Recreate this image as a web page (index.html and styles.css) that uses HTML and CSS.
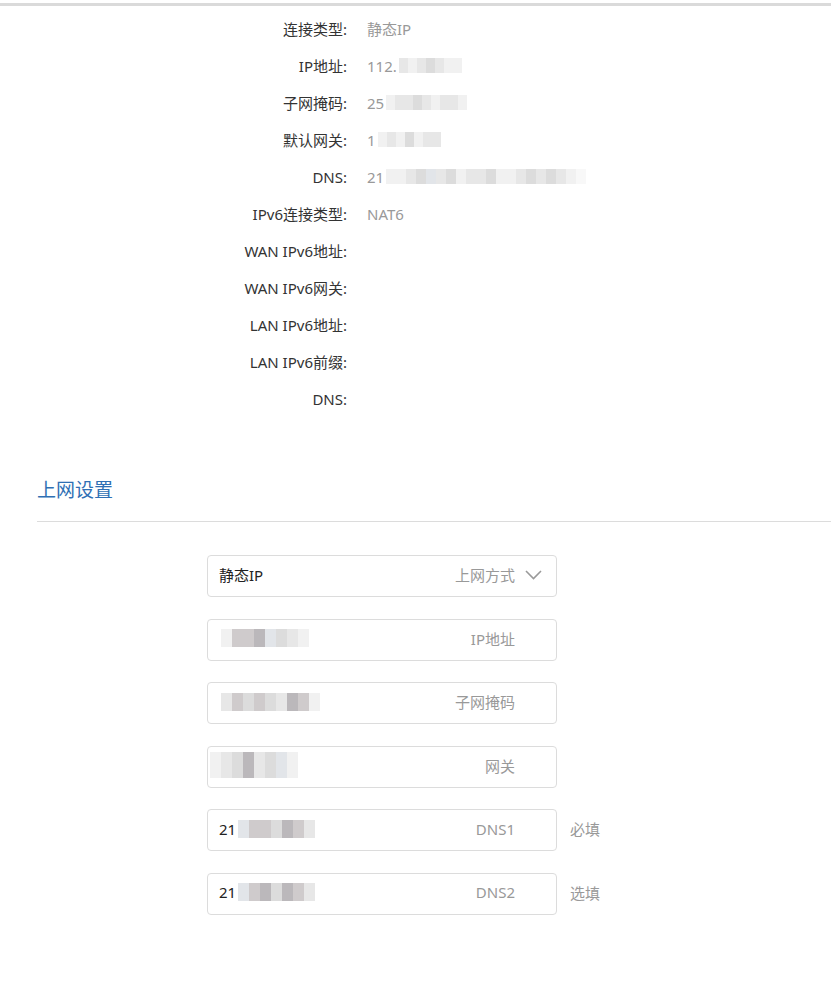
FILE: index.html
```html
<!DOCTYPE html>
<html lang="zh-CN">
<head>
    <meta charset="UTF-8">
    <title>网络设置</title>
    <link rel="stylesheet" href="styles.css">
</head>
<body>
<div class="page">

    <!-- 当前连接状态 -->
    <ul class="info">
        <li class="info-row"><span class="info-label">连接类型:</span><span class="info-value">静态IP</span></li>
        <li class="info-row"><span class="info-label">IP地址:</span><span class="info-value">112.<span class="mosaic"><i class="m2"></i><i class="m1"></i><i class="m2"></i><i class="m3"></i><i class="m2"></i><i class="m1"></i><i class="m1"></i></span></span></li>
        <li class="info-row"><span class="info-label">子网掩码:</span><span class="info-value">25<span class="mosaic"><i class="m1"></i><i class="m2"></i><i class="m2"></i><i class="m3"></i><i class="m2"></i><i class="m1"></i><i class="m2"></i><i class="m2"></i><i class="m1"></i></span></span></li>
        <li class="info-row"><span class="info-label">默认网关:</span><span class="info-value">1<span class="mosaic"><i class="m1"></i><i class="m2"></i><i class="m1"></i><i class="m3"></i><i class="m1"></i><i class="m2"></i><i class="m2"></i></span></span></li>
        <li class="info-row"><span class="info-label">DNS:</span><span class="info-value">21<span class="mosaic mosaic-long"><i class="m1"></i><i class="m1"></i><i class="m2"></i><i class="m3"></i><i class="m6"></i><i class="m2"></i><i class="m3"></i><i class="m1"></i><i class="m2"></i><i class="m2"></i><i class="m3"></i><i class="m1"></i><i class="m1"></i><i class="m2"></i><i class="m3"></i><i class="m2"></i><i class="m3"></i><i class="m2"></i><i class="m1"></i><i class="m0"></i></span></span></li>
        <li class="info-row"><span class="info-label">IPv6连接类型:</span><span class="info-value">NAT6</span></li>
        <li class="info-row"><span class="info-label">WAN IPv6地址:</span><span class="info-value"></span></li>
        <li class="info-row"><span class="info-label">WAN IPv6网关:</span><span class="info-value"></span></li>
        <li class="info-row"><span class="info-label">LAN IPv6地址:</span><span class="info-value"></span></li>
        <li class="info-row"><span class="info-label">LAN IPv6前缀:</span><span class="info-value"></span></li>
        <li class="info-row"><span class="info-label">DNS:</span><span class="info-value"></span></li>
    </ul>

    <!-- 上网设置 -->
    <div class="section">
        <h2 class="section-title">上网设置</h2>

        <form class="net-form">
            <div class="form-row">
                <div class="field field-select">
                    <span class="field-value field-text">静态IP</span>
                    <span class="field-name">上网方式</span>
                    <svg class="chevron" width="17" height="10" viewBox="0 0 17 10"><polyline points="1,1 8.5,8.5 16,1" fill="none" stroke="#9a9a9a" stroke-width="1.6"/></svg>
                </div>
            </div>

            <div class="form-row">
                <div class="field">
                    <span class="field-value"><span class="mosaic mosaic-input"><i class="m1"></i><i class="m4"></i><i class="m4"></i><i class="m5"></i><i class="m6"></i><i class="m3"></i><i class="m2"></i><i class="m1"></i></span></span>
                    <span class="field-name">IP地址</span>
                </div>
            </div>

            <div class="form-row">
                <div class="field">
                    <span class="field-value"><span class="mosaic mosaic-input"><i class="m2"></i><i class="m4"></i><i class="m3"></i><i class="m4"></i><i class="m3"></i><i class="m2"></i><i class="m5"></i><i class="m4"></i><i class="m1"></i></span></span>
                    <span class="field-name">子网掩码</span>
                </div>
            </div>

            <div class="form-row">
                <div class="field field-gw">
                    <span class="field-value"><span class="mosaic mosaic-input mosaic-tall"><i class="m1"></i><i class="m2"></i><i class="m3"></i><i class="m5"></i><i class="m2"></i><i class="m3"></i><i class="m6"></i><i class="m1"></i></span></span>
                    <span class="field-name">网关</span>
                </div>
            </div>

            <div class="form-row">
                <div class="field">
                    <span class="field-value field-text">21<span class="mosaic mosaic-input"><i class="m6"></i><i class="m4"></i><i class="m4"></i><i class="m3"></i><i class="m5"></i><i class="m4"></i><i class="m2"></i></span></span>
                    <span class="field-name">DNS1</span>
                </div>
                <span class="field-note">必填</span>
            </div>

            <div class="form-row">
                <div class="field">
                    <span class="field-value field-text">21<span class="mosaic mosaic-input"><i class="m6"></i><i class="m4"></i><i class="m5"></i><i class="m3"></i><i class="m5"></i><i class="m4"></i><i class="m2"></i></span></span>
                    <span class="field-name">DNS2</span>
                </div>
                <span class="field-note">选填</span>
            </div>
        </form>
    </div>

</div>
</body>
</html>
```

FILE: styles.css
```css
/* 基础 */
body {
    margin: 0;
    background: #fff;
    color: #333;
    font-family: "Microsoft YaHei", "Noto Sans", "Noto Sans CJK SC", sans-serif;
    font-size: 15px;
}

.page {
    margin-top: 3px;
    border-top: 3px solid #dadada;
    padding-top: 4px;
}

/* 状态信息 */
.info {
    list-style: none;
    margin: 0;
    padding: 0;
}

.info-row {
    display: flex;
    align-items: center;
    height: 37px;
}

.info-label {
    width: 347px;
    text-align: right;
    color: #333;
}

.info-value {
    display: flex;
    align-items: center;
    margin-left: 20px;
    color: #999;
}

/* 马赛克（打码） */
.mosaic {
    display: inline-flex;
    height: 15px;
    margin-left: 2px;
}

.mosaic i {
    display: block;
    width: 9px;
}

.mosaic-long i {
    width: 10px;
}

.mosaic-input {
    height: 18px;
}

.mosaic-input i {
    width: 11px;
}

.mosaic-tall {
    height: 26px;
}

.m0 { background: #f8f8f8; }
.m1 { background: #f1f1f1; }
.m2 { background: #e7e7e7; }
.m3 { background: #dcdcdc; }
.m4 { background: #cfcbcc; }
.m5 { background: #bbb8bb; }
.m6 { background: #e2e5e9; }

/* 上网设置 */
.section {
    margin-left: 37px;
}

.section-title {
    margin: 61px 0 0;
    padding-bottom: 19px;
    border-bottom: 1px solid #dcdcdc;
    color: #2f6fb4;
    font-size: 19px;
    font-weight: normal;
    line-height: 24px;
}

.net-form {
    padding: 33px 0 0 170px;
}

.form-row {
    display: flex;
    align-items: center;
    height: 42px;
    margin-bottom: 21.6px;
}

.field {
    display: flex;
    align-items: center;
    box-sizing: border-box;
    width: 350px;
    height: 42px;
    padding: 0 41px 3px 11px;
    border: 1px solid #dcdcdc;
    border-radius: 4px;
}

.field-gw {
    padding-left: 0;
}

.field-value {
    display: flex;
    align-items: center;
    flex: 1;
    color: #333;
}

.field-text {
    color: #222;
}

.field-name {
    color: #999;
}

.field-select {
    padding-right: 14px;
}

.chevron {
    margin-left: 10px;
}

.field-note {
    margin-left: 13px;
    padding-bottom: 3px;
    color: #999;
}
```
